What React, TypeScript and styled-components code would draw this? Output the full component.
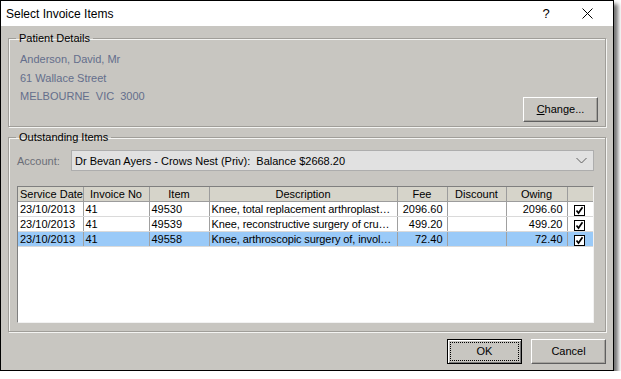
import React from 'react';
import styled, { createGlobalStyle } from 'styled-components';

interface InvoiceRow {
  date: string;
  invoice: string;
  item: string;
  description: string;
  fee: string;
  discount: string;
  owing: string;
  selected?: boolean;
}

const rows: InvoiceRow[] = [
  { date: '23/10/2013', invoice: '41', item: '49530', description: 'Knee, total replacement arthroplast…', fee: '2096.60', discount: '', owing: '2096.60' },
  { date: '23/10/2013', invoice: '41', item: '49539', description: 'Knee, reconstructive surgery of cru…', fee: '499.20', discount: '', owing: '499.20' },
  { date: '23/10/2013', invoice: '41', item: '49558', description: 'Knee, arthroscopic surgery of, invol…', fee: '72.40', discount: '', owing: '72.40', selected: true },
];

const columns: { label: string; width: number; align: 'left' | 'center' }[] = [
  { label: 'Service Date', width: 65, align: 'left' },
  { label: 'Invoice No', width: 66, align: 'center' },
  { label: 'Item', width: 60, align: 'center' },
  { label: 'Description', width: 188, align: 'center' },
  { label: 'Fee', width: 50, align: 'center' },
  { label: 'Discount', width: 59, align: 'center' },
  { label: 'Owing', width: 61, align: 'center' },
  { label: '', width: 26, align: 'center' },
];

const CheckBox = () => (
  <CheckFrame>
    <svg width="9" height="9" viewBox="0 0 9 9">
      <path d="M1.5 4.5 L3.5 7 L7.5 1.2" fill="none" stroke="#000" strokeWidth="1.7" />
    </svg>
  </CheckFrame>
);

const App: React.FC = () => {
  return (
    <>
      <GlobalStyle />
      <Window>
        <TitleBar>
          <TitleText>Select Invoice Items</TitleText>
          <HelpGlyph>?</HelpGlyph>
          <CloseGlyph>
            <svg width="11" height="11" viewBox="0 0 11 11">
              <path d="M0.5 0.5 L10.5 10.5 M10.5 0.5 L0.5 10.5" stroke="#000" strokeWidth="1" />
            </svg>
          </CloseGlyph>
        </TitleBar>

        <Body>
          <GroupBox $padRight={7}>
            <Legend>Patient Details</Legend>
            <PatientRow>
              <Address>
                <div>Anderson, David, Mr</div>
                <div>61 Wallace Street</div>
                <div>MELBOURNE&nbsp; VIC&nbsp; 3000</div>
              </Address>
              <Button>
                <u>C</u>hange...
              </Button>
            </PatientRow>
          </GroupBox>

          <GroupBox $padRight={11} $grow>
            <Legend>Outstanding Items</Legend>
            <AccountRow>
              <AccountLabel>Account:</AccountLabel>
              <Combo>
                <ComboText>Dr Bevan Ayers - Crows Nest (Priv):  Balance $2668.20</ComboText>
                <svg width="11" height="7" viewBox="0 0 11 7">
                  <path d="M0.5 1 L5.5 6 L10.5 1" fill="none" stroke="#606060" strokeWidth="1" />
                </svg>
              </Combo>
            </AccountRow>

            <GridFrame>
              <Grid>
                <colgroup>
                  {columns.map((c, i) => (
                    <col key={i} style={{ width: c.width }} />
                  ))}
                </colgroup>
                <thead>
                  <tr>
                    {columns.map((c, i) => (
                      <HeadCell key={i} $align={c.align}>
                        {c.label}
                      </HeadCell>
                    ))}
                  </tr>
                </thead>
                <tbody>
                  {rows.map((r, i) => (
                    <GridRow key={i} $selected={r.selected}>
                      <Cell>{r.date}</Cell>
                      <Cell>{r.invoice}</Cell>
                      <Cell>{r.item}</Cell>
                      <Cell $tight>{r.description}</Cell>
                      <Cell $right>{r.fee}</Cell>
                      <Cell $right>{r.discount}</Cell>
                      <Cell $right>{r.owing}</Cell>
                      <Cell $center>
                        <CheckBox />
                      </Cell>
                    </GridRow>
                  ))}
                </tbody>
              </Grid>
            </GridFrame>
          </GroupBox>

          <ButtonRow>
            <Button $default>
              <FocusRing>OK</FocusRing>
            </Button>
            <Button>Cancel</Button>
          </ButtonRow>
        </Body>
      </Window>
    </>
  );
};

const GlobalStyle = createGlobalStyle`
  body {
    margin: 0;
    background: #ffffff;
    font-family: "Liberation Sans", Arial, sans-serif;
  }
`;

const Window = styled.div`
  width: 614px;
  height: 371px;
  box-sizing: border-box;
  border: 1px solid #000;
  box-shadow: 4px 4px 4px rgba(0, 0, 0, 0.55);
  display: flex;
  flex-direction: column;
  font-size: 11px;
  color: #000;
`;

const TitleBar = styled.div`
  height: 25px;
  background: #fff;
  display: flex;
  align-items: center;
  padding-left: 5px;
  font-size: 12px;
`;

const TitleText = styled.span`
  flex: 1;
`;

const HelpGlyph = styled.span`
  width: 30px;
  text-align: center;
  font-size: 13px;
`;

const CloseGlyph = styled.span`
  width: 52px;
  display: flex;
  justify-content: center;
`;

const Body = styled.div`
  flex: 1;
  background: #c8c6c1;
  display: flex;
  flex-direction: column;
  padding: 6px 7px 6px 7px;
`;

const GroupBox = styled.fieldset<{ $padRight: number; $grow?: boolean }>`
  margin: 0;
  min-width: 0;
  padding: 5px ${(p) => p.$padRight}px 4px 8px;
  border: 1px solid #a09e99;
  box-shadow: inset 1px 1px 0 #f4f4f2, 1px 1px 0 #f4f4f2;
  display: flex;
  flex-direction: column;
  flex: ${(p) => (p.$grow ? 1 : 'none')};
  & + & {
    margin-top: 4px;
    padding-top: 6px;
    padding-bottom: 8px;
  }
`;

const Legend = styled.legend`
  font-size: 11px;
  line-height: 13px;
  padding: 0 3px;
  margin-left: -1px;
`;

const PatientRow = styled.div`
  height: 72px;
  display: flex;
  justify-content: space-between;
  align-items: flex-end;
  padding-left: 3px;
`;

const Address = styled.div`
  align-self: flex-start;
  color: #646e8c;
  line-height: 18.5px;
`;

const Button = styled.button<{ $default?: boolean }>`
  width: 75px;
  height: 25px;
  box-sizing: border-box;
  background: #c8c6c1;
  font-family: "Liberation Sans", Arial, sans-serif;
  font-size: 11px;
  color: #000;
  display: flex;
  align-items: stretch;
  justify-content: center;
  padding: ${(p) => (p.$default ? '2px' : '0')};
  border: 1px solid;
  border-color: ${(p) => (p.$default ? '#000' : '#fff #5f5f5f #5f5f5f #fff')};
  box-shadow: ${(p) => (p.$default ? 'inset 1px 1px 0 #fff, inset -1px -1px 0 #7a7a7a' : 'inset -1px -1px 0 #a4a29d')};
  line-height: 23px;
  u {
    text-decoration: underline;
  }
`;

const FocusRing = styled.span`
  flex: 1;
  border: 1px dotted #000;
  display: flex;
  align-items: center;
  justify-content: center;
  line-height: 1;
`;

const AccountRow = styled.div`
  display: flex;
  align-items: center;
  height: 21px;
`;

const AccountLabel = styled.span`
  width: 54px;
  color: #6b6e78;
`;

const Combo = styled.div`
  flex: 1;
  height: 21px;
  box-sizing: border-box;
  border: 1px solid #adadad;
  background: #e1e1e1;
  display: flex;
  align-items: center;
  padding: 0 6px 0 3px;
`;

const ComboText = styled.span`
  flex: 1;
  white-space: pre;
`;

const GridFrame = styled.div`
  margin-top: 15px;
  flex: 1;
  background: #fff;
  border: 1px solid;
  border-color: #7f7f7f #f2f2f2 #f2f2f2 #7f7f7f;
  overflow: hidden;
`;

const Grid = styled.table`
  width: 100%;
  border-collapse: collapse;
  table-layout: fixed;
  font-size: 11px;
`;

const HeadCell = styled.th<{ $align: 'left' | 'center' }>`
  height: 14px;
  padding: 0 2px;
  background: #d6d4ca;
  font-weight: normal;
  text-align: ${(p) => p.$align};
  border-right: 1px solid #9c9c9c;
  border-bottom: 1px solid #9c9c9c;
  white-space: nowrap;
  overflow: hidden;
  line-height: 14px;
`;

const GridRow = styled.tr<{ $selected?: boolean }>`
  height: 15px;
  background: ${(p) => (p.$selected ? '#9acaf8' : '#fff')};
`;

const Cell = styled.td<{ $right?: boolean; $center?: boolean; $tight?: boolean }>`
  padding: 0 ${(p) => (p.$right ? '4px' : p.$tight ? '0' : '2px')} 0 2px;
  line-height: 14px;
  letter-spacing: ${(p) => (p.$tight ? '-0.1px' : 'normal')};
  text-align: ${(p) => (p.$right ? 'right' : p.$center ? 'center' : 'left')};
  border-right: 1px solid #a0a0a0;
  border-bottom: 1px solid #dadada;
  white-space: nowrap;
  overflow: hidden;
  text-overflow: ellipsis;
`;

const CheckFrame = styled.span`
  display: inline-flex;
  align-items: center;
  justify-content: center;
  width: 11px;
  height: 11px;
  box-sizing: border-box;
  border: 1px solid #000;
  background: #fff;
  vertical-align: middle;
  margin-left: -2px;
`;

const ButtonRow = styled.div`
  margin-top: 7px;
  height: 25px;
  display: flex;
  justify-content: flex-end;
  gap: 9px;
`;

export default App;
